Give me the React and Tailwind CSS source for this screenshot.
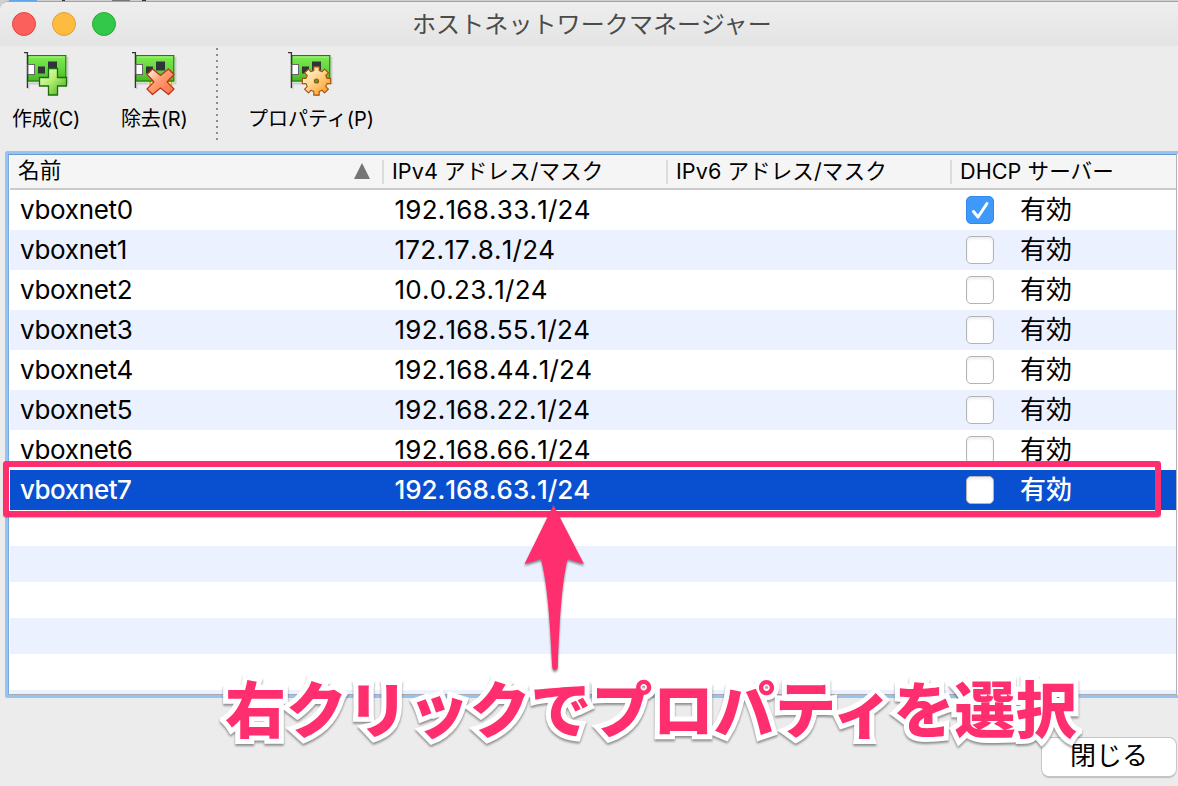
import React from "react";

const PINK = "#ff2e6e";
const JP = "font-['Inter','Noto_Sans_CJK_JP',sans-serif]";

const rows = [
  { name: "vboxnet0", ip: "192.168.33.1/24", dhcp: true },
  { name: "vboxnet1", ip: "172.17.8.1/24" },
  { name: "vboxnet2", ip: "10.0.23.1/24" },
  { name: "vboxnet3", ip: "192.168.55.1/24" },
  { name: "vboxnet4", ip: "192.168.44.1/24" },
  { name: "vboxnet5", ip: "192.168.22.1/24" },
  { name: "vboxnet6", ip: "192.168.66.1/24" },
  { name: "vboxnet7", ip: "192.168.63.1/24", selected: true },
];

const gearPoints = Array.from({ length: 32 }, (_, i) => {
  const tooth = Math.floor(i / 4);
  const step = i % 4;
  const deg = tooth * 45 + [-14, -11, 11, 14][step];
  const r = step === 1 || step === 2 ? 14.4 : 10.8;
  const a = (deg * Math.PI) / 180;
  return `${(28.5 + r * Math.sin(a)).toFixed(2)},${(29 - r * Math.cos(a)).toFixed(2)}`;
}).join(" ");

function CardIcon({ kind }) {
  return (
    <svg width="48" height="48" viewBox="0 0 48 48" className="block">
      <defs>
        <linearGradient id={`board-${kind}`} x1="0" y1="0" x2="0" y2="1">
          <stop offset="0" stopColor="#7fea52" />
          <stop offset=".5" stopColor="#66d83e" />
          <stop offset="1" stopColor="#45b824" />
        </linearGradient>
        <linearGradient id={`mark-${kind}`} x1="0" y1="0" x2="1" y2="1">
          <stop offset="0" stopColor={kind === "add" ? "#f6ffdc" : "#fffbe8"} />
          <stop offset=".45" stopColor={kind === "add" ? "#b4f070" : kind === "remove" ? "#ff9b70" : "#ffd690"} />
          <stop offset="1" stopColor={kind === "add" ? "#3aa81c" : kind === "remove" ? "#ff6f45" : "#ff8d08"} />
        </linearGradient>
      </defs>
      <path d="M4.500 37V31.500H43.500V5" fill="none" stroke="#000" strokeOpacity=".13" strokeWidth="2" />
      {kind === "remove" && (
        <>
          <rect x="16" y="29" width="25" height="4.500" fill="#f6e9b0" />
          <path d="M18 29v4.500M22 29v4.500M36 29v4.500M39.500 29v4.500" stroke="#e0a81c" strokeWidth="1.500" />
        </>
      )}
      <rect x="3.800" y="3.600" width="38" height="25.500" fill={`url(#board-${kind})`} stroke="#1f7d0c" strokeWidth="1.200" />
      <path d="M5 5H41" stroke="#a8f884" />
      <path d="M0 .6H3.400V36" fill="none" stroke="#333" strokeWidth="1.300" />
      <rect x="4" y="12.500" width="6.500" height="10" fill="#fff" stroke="#666" />
      <rect x="14" y="14.500" width="7" height="7" fill="#30353a" />
      <rect x="24" y="9.500" width="9" height="9" fill="#30353a" />
      {kind === "add" && (
        <path d="M24.500 16.500h9v9h9v8.500h-9v9h-9v-9h-9v-8.500h9z" fill={`url(#mark-${kind})`} stroke="#1c6e0c" strokeWidth="1.300" />
      )}
      {kind === "remove" && (
        <path
          d="M20.500 17 28.500 23.500 36.500 17 42 22.500 35 29.800 42 37 36.500 42.500 28.500 36 20.500 42.500 15 37 22 29.800 15 22.500Z"
          fill={`url(#mark-${kind})`}
          stroke="#b8321c"
          strokeWidth="1.200"
          strokeLinejoin="round"
        />
      )}
      {kind === "gear" && (
        <>
          <polygon points={gearPoints} fill={`url(#mark-${kind})`} stroke="#a4500a" strokeWidth="1.100" strokeLinejoin="round" />
          <circle cx="28.500" cy="29" r="2" fill="#5da52c" stroke="#8a5210" strokeWidth="1.200" />
        </>
      )}
    </svg>
  );
}

function ToolButton({ kind, label, className, iconClass, labelClass }) {
  return (
    <div className={`flex flex-col ${className}`}>
      <div className={iconClass}>
        <CardIcon kind={kind} />
      </div>
      <span className={`mt-[7px] whitespace-nowrap text-[20px] leading-[24px] text-black ${labelClass}`}>{label}</span>
    </div>
  );
}

function Checkbox({ checked }) {
  if (checked) {
    return (
      <div className="flex size-7 items-center justify-center rounded-[5px] border border-[#3487f0] bg-[#3f99fb]">
        <svg width="26" height="26" viewBox="0 0 26 26">
          <path d="M6.500 14.500 11 20 20 6.500" fill="none" stroke="#fff" strokeWidth="3" strokeLinecap="round" strokeLinejoin="round" />
        </svg>
      </div>
    );
  }
  return <div className="size-7 rounded-[5px] border border-[#b4b4b4] bg-white shadow-[inset_0_2px_3px_rgba(0,0,0,0.08)]" />;
}

function HeaderCell({ className, children }) {
  return (
    <div className={`flex items-center whitespace-nowrap text-[21.600px] leading-[32px] tracking-[0.05px] ${className}`}>{children}</div>
  );
}

function Divider() {
  return <div className="mt-[5px] h-6 w-[2px] shrink-0 bg-[#dcdcdc]" />;
}

function NetworkTable() {
  return (
    <div className="ml-[5px] h-[547px] rounded-l-[3px] border-y-[3px] border-l-[3px] border-[#97c3f3] bg-white">
      <div className="flex h-full flex-col border border-t-[#6898cc] border-r-[#b3b3b3] border-b-[#a8acb0] border-l-[#78a9df] mr-px pl-px">
        <div className="flex h-[35px] shrink-0 border-b-2 border-[#cbcbcb] bg-[#f5f5f5]">
          <HeaderCell className="w-[372px] justify-between pl-[8px] pr-[11px]">
            <span className="-mt-[3px]">名前</span>
            <svg width="18" height="16" viewBox="0 0 18 16" className="-mt-[2px]">
              <path d="M9 0 17 16H1Z" fill="#757575" />
            </svg>
          </HeaderCell>
          <Divider />
          <HeaderCell className="w-[282px] pb-[2px] pl-[8px]">IPv4 アドレス/マスク</HeaderCell>
          <Divider />
          <HeaderCell className="w-[282px] pb-[2px] pl-[8px]">IPv6 アドレス/マスク</HeaderCell>
          <Divider />
          <HeaderCell className="flex-1 pb-[2px] pl-[8px]">DHCP サーバー</HeaderCell>
        </div>
        {rows.map((r, i) => (
          <div
            key={r.name}
            className={`flex h-10 shrink-0 items-center whitespace-nowrap text-[26px] leading-10 ${
              r.selected ? "bg-[#0850d0] font-medium text-white" : i % 2 ? "bg-[#ebf1fe] text-black" : "bg-white text-black"
            }`}
          >
            <div className={`w-[374px] pl-[10px] ${r.selected ? "tracking-[-0.5px]" : "tracking-[-0.3px]"}`}>{r.name}</div>
            <div className={`w-[582px] pl-[10.500px] [font-kerning:none] ${r.selected ? "tracking-[-0.05px]" : "tracking-[0.25px]"}`}>{r.ip}</div>
            <Checkbox checked={r.dhcp} />
            <div className="pl-[26px]">有効</div>
          </div>
        ))}
        <div className="h-9 shrink-0 bg-white" />
        <div className="h-9 shrink-0 bg-[#ebf1fe]" />
        <div className="h-9 shrink-0 bg-white" />
        <div className="h-9 shrink-0 bg-[#ebf1fe]" />
        <div className="h-9 shrink-0 bg-white" />
        <div className="min-h-0 flex-1 bg-[#ebf1fe]" />
      </div>
    </div>
  );
}

function Annotations() {
  return (
    <>
      <div className="absolute left-[3px] top-[461px] h-[56px] w-[1158px] rounded-[3px] border-[6px] border-[#ff2e6e] shadow-[0_1px_1px_rgba(0,0,0,0.25)]">
        <div className="h-full w-full border-t-[3px] border-b border-white" />
      </div>
      <svg className="absolute left-[515px] top-[495px] drop-shadow-[0_2px_1px_rgba(0,0,0,0.45)]" width="80" height="184" viewBox="515 495 80 184">
        <path
          d="M553.500 505 584 564 567.500 559C562 582 559.500 618 557.800 667Q557.500 670 555 670Q552.500 670 552.200 667C550 618 547 582 541 559L524.500 564Z"
          fill={PINK}
        />
      </svg>
      <div className="absolute left-[225px] top-[667px] whitespace-nowrap text-[61px] font-black leading-[88px] tracking-[0.100px] text-[#ff2e6e] [-webkit-text-stroke:10px_white] [paint-order:stroke_fill] [stroke-linejoin:round] drop-shadow-[0_2px_1px_rgba(0,0,0,0.4)]">
        右クリックでプロパティを選択
      </div>
    </>
  );
}

export default function App() {
  return (
    <div className={`relative flex h-[786px] w-[1178px] flex-col overflow-hidden bg-[#cfd0cf] text-black ${JP}`}>
      <div className="flex h-px shrink-0">
        <div className="ml-[9px] h-px w-7 bg-[#5fa8e8]" />
        <div className="ml-[25px] h-px w-[3px] bg-[#333]" />
        <div className="ml-[47px] h-px w-[18px] bg-[#777]" />
        <div className="ml-[12px] h-px w-[4px] bg-[#333]" />
      </div>
      <div className="flex flex-1 flex-col rounded-tl-[9px] border-t border-[#a2a2a2] bg-[#ececec]">
        <div className="flex h-[44px] shrink-0 items-center rounded-tl-[8px] bg-linear-to-b from-[#eeeeee] to-[#e4e4e4]">
          <div className="flex w-[412px] gap-4 pl-3">
            <div className="size-6 rounded-full border border-[#e2463f] bg-[#fc605c]" />
            <div className="size-6 rounded-full border border-[#e0a03a] bg-[#fdbc40]" />
            <div className="size-6 rounded-full border border-[#27aa35] bg-[#34c84a]" />
          </div>
          <span className="pt-[2px] text-[24px] leading-[42px] tracking-[0.1px] text-[#4b4b4b]">ホストネットワークマネージャー</span>
        </div>
        <div className="flex h-[105px] shrink-0 pt-[6px]">
          <ToolButton kind="add" label="作成(C)" className="w-[109px] pl-[12px]" iconClass="ml-[12px] h-12" labelClass="tracking-[-0.2px]" />
          <ToolButton kind="remove" label="除去(R)" className="w-[107px] pl-[12px]" iconClass="ml-[11px] h-12" labelClass="tracking-[-0.15px]" />
          <div className="mt-[-4px] h-[93px] w-[2px] bg-[repeating-linear-gradient(to_bottom,#8c8c8c_0_2px,transparent_2px_6px)]" />
          <ToolButton kind="gear" label="プロパティ(P)" className="pl-[30px]" iconClass="ml-[40px] h-12" labelClass="tracking-[0px]" />
        </div>
        <NetworkTable />
        <div className="flex flex-1 justify-end pr-[2px] pt-[40px]">
          <button className="h-[38px] w-[134px] rounded-[7px] bg-white pb-[3px] text-[26px] leading-[34px] shadow-[0_0_0_1px_#c6c6c6,0_2px_1px_rgba(0,0,0,0.2)]">
            閉じる
          </button>
        </div>
      </div>
      <Annotations />
    </div>
  );
}
